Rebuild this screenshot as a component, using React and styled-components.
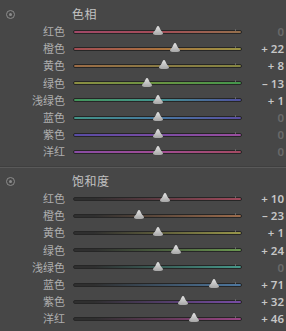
import React from 'react';
import styled, { createGlobalStyle } from 'styled-components';

const GlobalStyle = createGlobalStyle`
  html, body {
    margin: 0;
    padding: 0;
    background: #474747;
  }
`;

const Panel = styled.div`
  width: 286px;
  height: 331px;
  overflow: hidden;
  background: #474747;
  font-family: "Noto Sans CJK SC", "Noto Sans", sans-serif;
`;

const Section = styled.section`
  padding: ${({ top }) => top}px 0 ${({ bottom }) => bottom}px;
`;

const Divider = styled.div`
  height: 1px;
  background: #595959;
  box-shadow: 0 -1px 0 #3f3f3f;
`;

const Header = styled.div`
  display: grid;
  grid-template-columns: 72px 1fr;
  align-items: center;
  height: 18px;
`;

const Toggle = styled.span`
  justify-self: start;
  margin-left: 6px;
  width: 7px;
  height: 7px;
  border-radius: 50%;
  border: 1px solid #8c8c8c;
  display: flex;
  align-items: center;
  justify-content: center;
  &::after {
    content: '';
    width: 3px;
    height: 3px;
    border-radius: 50%;
    background: #8c8c8c;
  }
`;

const Title = styled.span`
  font-size: 12px;
  color: #c2c2c2;
  line-height: 18px;
  letter-spacing: 0.5px;
`;

const Row = styled.div`
  display: grid;
  grid-template-columns: 65px 169px 34px;
  column-gap: 8px;
  align-items: center;
  height: 17.2px;
  padding-right: 10px;
`;

const Label = styled.span`
  text-align: right;
  font-size: 11px;
  color: #aeaeae;
  line-height: 17px;
  white-space: nowrap;
`;

const Track = styled.div`
  position: relative;
  height: 4px;
  box-sizing: border-box;
  border: 1px solid #262626;
  border-radius: 2px;
  background: ${({ gradient }) => gradient};
  &::after {
    content: '';
    position: absolute;
    right: 5px;
    top: -2px;
    width: 1px;
    height: 2px;
    background: #646464;
  }
`;

const Thumb = styled.svg`
  position: absolute;
  top: -4.5px;
  width: 10px;
  height: 9px;
  margin-left: -5px;
  filter: drop-shadow(0 0.5px 0.6px rgba(0, 0, 0, 0.6));
`;

const Value = styled.span`
  text-align: right;
  font-family: "Noto Sans", "Open Sans", sans-serif;
  font-weight: 600;
  font-size: 11.5px;
  line-height: 17px;
  color: ${({ zero }) => (zero ? '#6a6a6a' : '#c6c6c6')};
  white-space: nowrap;
`;

const dark = '#2f2f2f';

const hue = [
  ['红色', 'linear-gradient(90deg, #a04868, #a44c58 50%, #94704c)', 0],
  ['橙色', 'linear-gradient(90deg, #a44c54, #aa723e 50%, #9a9444)', 22],
  ['黄色', 'linear-gradient(90deg, #9c6c46, #8a7a44 50%, #868642)', 8],
  ['绿色', 'linear-gradient(90deg, #8c8e42, #6a9442 50%, #44964c)', -13],
  ['浅绿色', 'linear-gradient(90deg, #44965a, #429490 50%, #5050a0)', 1],
  ['蓝色', 'linear-gradient(90deg, #429486, #4678a0 50%, #5a4ea2)', 0],
  ['紫色', 'linear-gradient(90deg, #584ca4, #7a4ca4 50%, #9a4e9e)', 0],
  ['洋红', 'linear-gradient(90deg, #884ca4, #a04c94 50%, #a44a62)', 0],
];

const sat = [
  ['红色', '#a04a5c', 10],
  ['橙色', '#9c6c4c', -23],
  ['黄色', '#98964a', 1],
  ['绿色', '#6a9850', 24],
  ['浅绿色', '#46988a', 0],
  ['蓝色', '#4e78a0', 71],
  ['紫色', '#784ca6', 32],
  ['洋红', '#9c4686', 46],
];

const format = (v) => {
  if (v === 0) return '0';
  return v > 0 ? `+ ${v}` : `\u2013 ${Math.abs(v)}`;
};

const ThumbIcon = ({ value }) => (
  <Thumb viewBox="0 0 10 9" style={{ left: `${50 + (value / 100) * 47.3}%` }}>
    <defs>
      <linearGradient id="tg" x1="0" y1="0" x2="0" y2="1">
        <stop offset="0" stopColor="#e4e4e4" />
        <stop offset="1" stopColor="#a6a6a6" />
      </linearGradient>
    </defs>
    <path
      d="M5 0 C6.2 0 6.7 2 7.7 4 C8.7 5.6 10 6 10 7.4 C10 8.5 8.6 9 5 9 C1.4 9 0 8.5 0 7.4 C0 6 1.3 5.6 2.3 4 C3.3 2 3.8 0 5 0 Z"
      fill="url(#tg)"
    />
  </Thumb>
);

const Slider = ({ label, gradient, value }) => (
  <Row>
    <Label>{label}</Label>
    <Track gradient={gradient}>
      <ThumbIcon value={value} />
    </Track>
    <Value zero={value === 0}>{format(value)}</Value>
  </Row>
);

const App = () => (
  <Panel>
    <GlobalStyle />
    <Section top={5} bottom={6.5}>
      <Header>
        <Toggle />
        <Title>色相</Title>
      </Header>
      {hue.map(([label, gradient, value]) => (
        <Slider key={label} label={label} gradient={gradient} value={value} />
      ))}
    </Section>
    <Divider />
    <Section top={4} bottom={0}>
      <Header>
        <Toggle />
        <Title>饱和度</Title>
      </Header>
      {sat.map(([label, color, value]) => (
        <Slider
          key={label}
          label={label}
          gradient={`linear-gradient(90deg, ${dark}, ${dark} 12%, ${color})`}
          value={value}
        />
      ))}
    </Section>
  </Panel>
);

export default App;
